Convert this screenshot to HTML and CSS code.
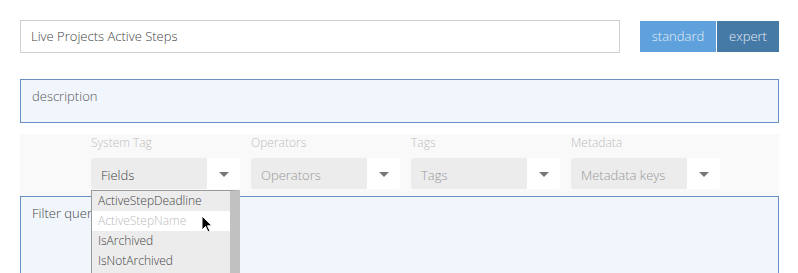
FILE: index.html
```html
<!DOCTYPE html>
<html>
<head>
<meta charset="utf-8">
<link rel="stylesheet" href="styles.css">
</head>
<body>
<div class="page">
  <div class="top">
    <div class="name-input">Live Projects Active Steps</div>
    <div class="modes">
      <span class="mode standard">standard</span>
      <span class="mode expert">expert</span>
    </div>
  </div>
  <div class="desc">description</div>
  <div class="panel">
    <div class="col">
      <div class="label">System Tag</div>
      <div class="select"><span class="val dark">Fields</span><span class="arrow"></span></div>
      <ul class="dropdown">
        <li>ActiveStepDeadline</li>
        <li class="hover">ActiveStepName</li>
        <li>IsArchived</li>
        <li>IsNotArchived</li>
      </ul>
    </div>
    <div class="col">
      <div class="label">Operators</div>
      <div class="select"><span class="val">Operators</span><span class="arrow"></span></div>
    </div>
    <div class="col">
      <div class="label">Tags</div>
      <div class="select"><span class="val">Tags</span><span class="arrow"></span></div>
    </div>
    <div class="col">
      <div class="label">Metadata</div>
      <div class="select"><span class="val">Metadata keys</span><span class="arrow"></span></div>
    </div>
  </div>
  <div class="filter">Filter query</div>
</div>
<svg class="cursor" width="12" height="19" viewBox="0 0 12 19"><path d="M1 1 L1 15 L4.5 11.5 L7 17 L9 16 L6.5 10.8 L11 10.8 Z" fill="#000" stroke="#fff" stroke-width="1"/></svg>
</body>
</html>
```
FILE: styles.css
```css
html, body { margin: 0; padding: 0; background: #fff; }
body { font-family: "Open Sans", "Noto Sans", sans-serif; font-weight: 300; font-size: 13px; color: #555; overflow: hidden; position: relative; height: 273px; }
.page { padding: 20px 19px 0 20px; }
.top { display: flex; align-items: flex-start; }
.name-input { box-sizing: border-box; width: 600px; height: 33px; border: 1px solid #d0d0d0; padding: 7px 10px; line-height: 17px; color: #444; }
.modes { display: flex; margin-left: 20px; margin-top: 1px; gap: 1px; }
.mode { display: block; height: 31px; line-height: 30px; color: #e6eef7; font-size: 13px; text-align: center; }
.standard { width: 76px; background: #5ea1dc; }
.expert { width: 62px; background: #4579a6; }
.desc { box-sizing: border-box; margin-top: 26px; height: 44px; border: 1px solid #6a8fc3; background: #f1f6fd; padding: 8px 11px; line-height: 17px; color: #555; }
.panel { margin-top: 11px; height: 62px; background: #f9f9f9; display: flex; gap: 11px; padding-left: 71px; box-sizing: border-box; }
.col { position: relative; width: 149px; }
.label { font-size: 12px; color: #bdbdbd; height: 24px; line-height: 18px; margin-top: 0px; }
.select { display: flex; height: 31px; background: #fff; border-radius: 3px; }
.val { display: block; width: 116px; background: #ececec; border-radius: 3px 0 0 3px; padding-top: 3px; line-height: 28px; padding-left: 10px; box-sizing: border-box; color: #999; }
.val.dark { color: #444; }
.arrow { flex: 1; display: flex; align-items: center; justify-content: center; }
.arrow::before { content: ""; border-left: 5px solid transparent; border-right: 5px solid transparent; border-top: 5px solid #777; margin-top: 1px; }
.filter { box-sizing: border-box; height: 90px; border: 1px solid #6a8fc3; border-bottom: none; background: #f1f6fd; padding: 8px 11px; line-height: 17px; color: #444; }
.dropdown { position: absolute; left: 0; top: 56px; width: 149px; margin: 0; padding: 0; list-style: none; background: #ececec; border: 1px solid #9a9a9a; border-bottom: none; box-sizing: border-box; border-right: 10px solid #c1c1c1; z-index: 2; height: 90px; }
.dropdown li { height: 20px; line-height: 19px; padding-left: 6px; color: #444; font-size: 12px; }
.dropdown li.hover { background: #fff; color: #bbb; }
.cursor { position: absolute; left: 201px; top: 215px; z-index: 5; }
```
